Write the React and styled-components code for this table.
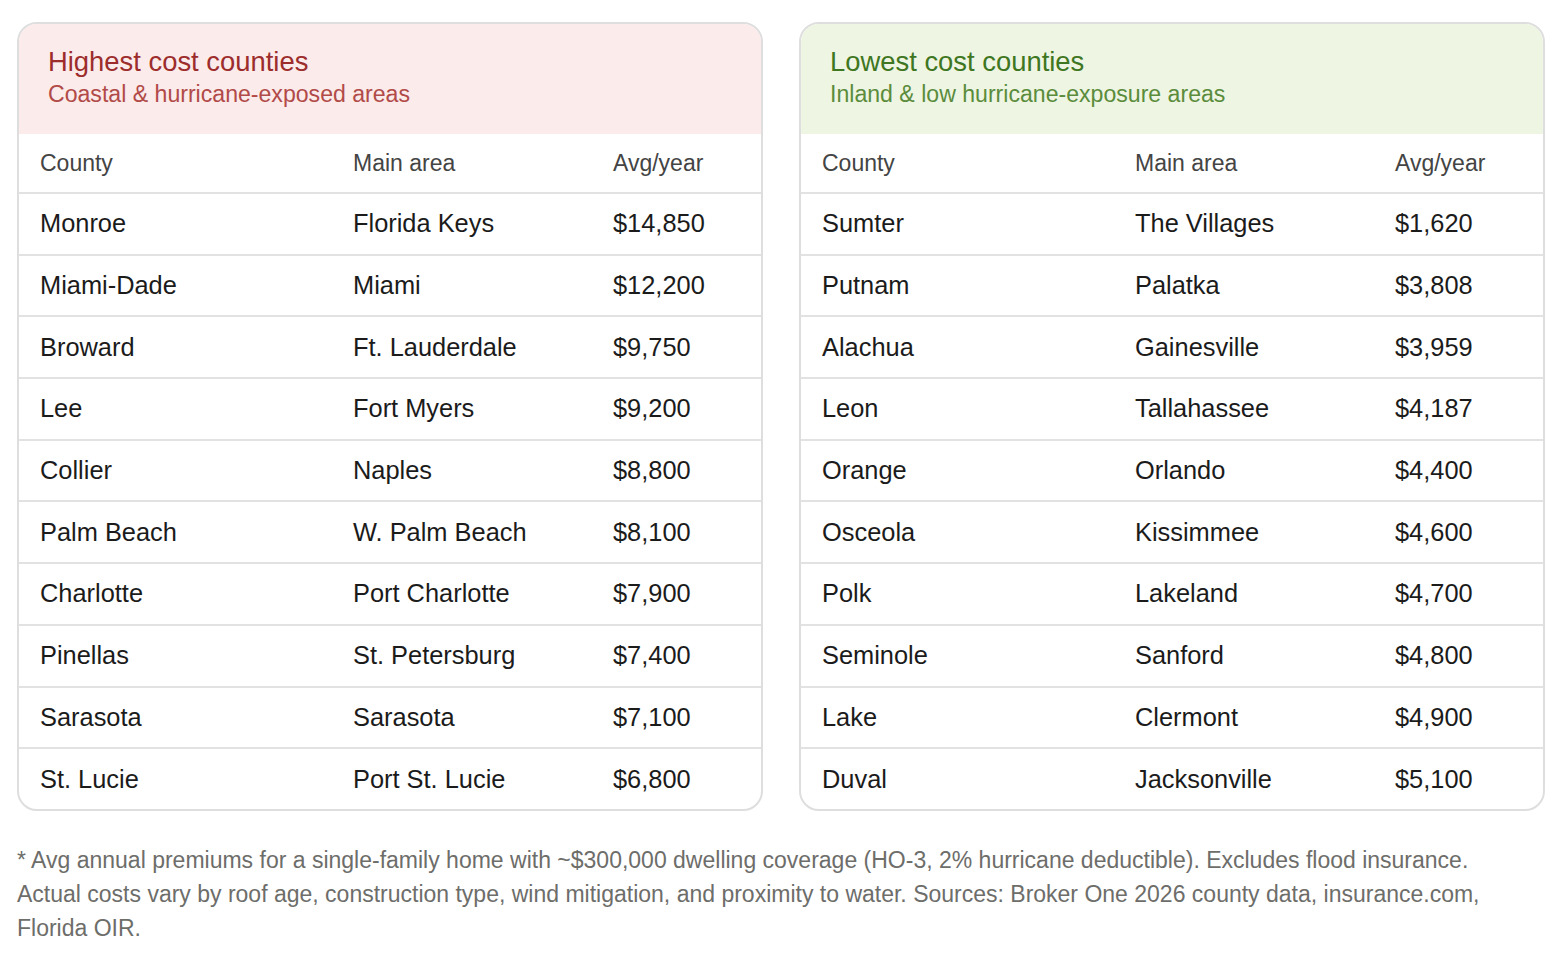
import React from "react";
import styled, { createGlobalStyle } from "styled-components";

const Global = createGlobalStyle`
  html, body { margin: 0; padding: 0; background: #ffffff; }
  body { font-family: "Liberation Sans", Arial, Helvetica, sans-serif; }
`;

const Page = styled.div`
  padding: 22px 17px 0 17px;
  box-sizing: border-box;
  width: 1562px;
`;

const Cards = styled.div`
  display: grid;
  grid-template-columns: 1fr 1fr;
  gap: 36px;
`;

const Card = styled.section`
  border: 2px solid #dedede;
  border-radius: 20px;
  overflow: hidden;
  background: #fff;
`;

const CardHeader = styled.header`
  background: ${(p) => (p.$tone === "red" ? "#fbebea" : "#eef5e3")};
  padding: 22px 29px 22px 29px;
  height: 110px;
  box-sizing: border-box;
`;

const Title = styled.div`
  font-size: 27.4px;
  line-height: 32px;
  color: ${(p) => (p.$tone === "red" ? "#9c2d2c" : "#3f7621")};
`;

const Subtitle = styled.div`
  font-size: 23.1px;
  line-height: 30px;
  margin-top: 1px;
  color: ${(p) => (p.$tone === "red" ? "#b14a48" : "#5b8c3c")};
`;

const Table = styled.table`
  width: 100%;
  border-collapse: collapse;
  table-layout: fixed;
`;

const HeadCell = styled.th`
  text-align: left;
  font-weight: normal;
  font-size: 23px;
  color: #444;
  height: 58px;
  padding: 0 0 0 21px;
  border-bottom: 2px solid #e2e2e2;
  vertical-align: middle;
`;

const Row = styled.tr`
  &:not(:last-child) td {
    border-bottom: 2px solid #e2e2e2;
  }
`;

const Cell = styled.td`
  font-size: 25.4px;
  color: #1b1b1b;
  height: 59.7px;
  padding: 0 0 0 21px;
  vertical-align: middle;
  white-space: nowrap;
`;

const Footnote = styled.p`
  margin: 32px 0 0 0;
  max-width: 1515px;
  font-size: 23px;
  line-height: 34px;
  color: #6d6d6a;
`;

const high = [
  ["Monroe", "Florida Keys", "$14,850"],
  ["Miami-Dade", "Miami", "$12,200"],
  ["Broward", "Ft. Lauderdale", "$9,750"],
  ["Lee", "Fort Myers", "$9,200"],
  ["Collier", "Naples", "$8,800"],
  ["Palm Beach", "W. Palm Beach", "$8,100"],
  ["Charlotte", "Port Charlotte", "$7,900"],
  ["Pinellas", "St. Petersburg", "$7,400"],
  ["Sarasota", "Sarasota", "$7,100"],
  ["St. Lucie", "Port St. Lucie", "$6,800"],
];

const low = [
  ["Sumter", "The Villages", "$1,620"],
  ["Putnam", "Palatka", "$3,808"],
  ["Alachua", "Gainesville", "$3,959"],
  ["Leon", "Tallahassee", "$4,187"],
  ["Orange", "Orlando", "$4,400"],
  ["Osceola", "Kissimmee", "$4,600"],
  ["Polk", "Lakeland", "$4,700"],
  ["Seminole", "Sanford", "$4,800"],
  ["Lake", "Clermont", "$4,900"],
  ["Duval", "Jacksonville", "$5,100"],
];

function CountyCard({ tone, title, subtitle, rows }) {
  return (
    <Card>
      <CardHeader $tone={tone}>
        <Title $tone={tone}>{title}</Title>
        <Subtitle $tone={tone}>{subtitle}</Subtitle>
      </CardHeader>
      <Table>
        <colgroup>
          <col style={{ width: "313px" }} />
          <col style={{ width: "260px" }} />
          <col />
        </colgroup>
        <thead>
          <tr>
            <HeadCell>County</HeadCell>
            <HeadCell>Main area</HeadCell>
            <HeadCell>Avg/year</HeadCell>
          </tr>
        </thead>
        <tbody>
          {rows.map((r) => (
            <Row key={r[0]}>
              <Cell>{r[0]}</Cell>
              <Cell>{r[1]}</Cell>
              <Cell>{r[2]}</Cell>
            </Row>
          ))}
        </tbody>
      </Table>
    </Card>
  );
}

export default function App() {
  return (
    <Page>
      <Global />
      <Cards>
        <CountyCard
          tone="red"
          title="Highest cost counties"
          subtitle="Coastal & hurricane-exposed areas"
          rows={high}
        />
        <CountyCard
          tone="green"
          title="Lowest cost counties"
          subtitle="Inland & low hurricane-exposure areas"
          rows={low}
        />
      </Cards>
      <Footnote>
        * Avg annual premiums for a single-family home with ~$300,000 dwelling coverage (HO-3, 2% hurricane deductible). Excludes flood insurance. Actual costs vary by roof age, construction type, wind mitigation, and proximity to water. Sources: Broker One 2026 county data, insurance.com, Florida OIR.
      </Footnote>
    </Page>
  );
}
